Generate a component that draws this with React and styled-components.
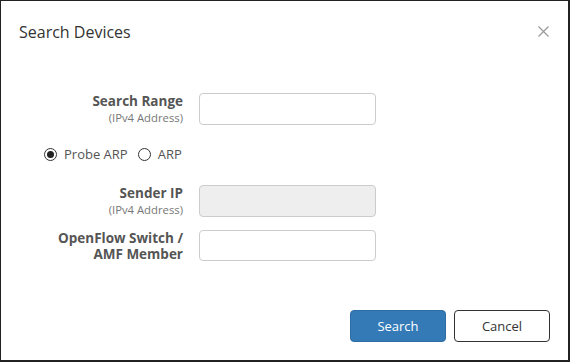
import React, { useState } from "react";
import styled, { createGlobalStyle } from "styled-components";

const GlobalStyle = createGlobalStyle`
  html, body {
    margin: 0;
    padding: 0;
    background: #fff;
  }
  body {
    font-family: "Open Sans", "Noto Sans", "Liberation Sans", sans-serif;
    color: #333;
  }
  * {
    box-sizing: border-box;
  }
`;

const Styled = {
  Modal: styled.div`
    width: 570px;
    height: 362px;
    display: flex;
    flex-direction: column;
    border-style: solid;
    border-color: #222;
    border-width: 1px 2px 2px 1px;
    background: #fff;
  `,
  Header: styled.div`
    display: flex;
    align-items: flex-start;
    justify-content: space-between;
    padding: 18px 18px 0 18px;
    height: 62px;
  `,
  Title: styled.h4`
    margin: 0;
    font-size: 16px;
    font-weight: 400;
    line-height: 26px;
    color: #333;
  `,
  Close: styled.button`
    border: none;
    background: none;
    padding: 0;
    margin-top: 5px;
    width: 14px;
    height: 14px;
    cursor: pointer;
    display: flex;
    align-items: center;
    justify-content: center;
  `,
  Body: styled.div`
    flex: 1;
    display: flex;
    flex-direction: column;
    padding: 30px 0 0 0;
  `,
  Row: styled.div`
    display: grid;
    grid-template-columns: 182px 177px;
    column-gap: 16px;
    align-items: start;
    margin-bottom: ${(p) => p.$gap || 0}px;
  `,
  Label: styled.label`
    display: flex;
    flex-direction: column;
    align-items: flex-end;
    text-align: right;
    font-size: 13.5px;
    font-weight: 700;
    color: #555;
    line-height: ${(p) => p.$lh || 15}px;
    padding-top: ${(p) => p.$top || 0}px;
  `,
  Hint: styled.span`
    font-size: 11.3px;
    font-weight: 400;
    color: #777;
    line-height: 14px;
    margin-top: 2px;
  `,
  Input: styled.input`
    width: 177px;
    height: ${(p) => p.$h || 32}px;
    border: 1px solid #ccc;
    border-radius: 4px;
    background: ${(p) => (p.disabled ? "#eee" : "#fff")};
    font: inherit;
    font-size: 13px;
    padding: 4px 10px;
    outline: none;
  `,
  RadioRow: styled.div`
    display: flex;
    align-items: center;
    gap: 10px;
    padding-left: 43px;
    height: 20px;
    margin: 19px 0 21px;
  `,
  RadioLabel: styled.label`
    display: flex;
    align-items: center;
    gap: 7px;
    font-size: 13px;
    color: #555;
    cursor: pointer;
  `,
  Radio: styled.input`
    appearance: none;
    margin: 0;
    width: 13px;
    height: 13px;
    border: 1px solid #333;
    border-radius: 50%;
    display: grid;
    place-content: center;
    &::before {
      content: "";
      width: 7px;
      height: 7px;
      border-radius: 50%;
      background: #222;
      transform: scale(0);
    }
    &:checked::before {
      transform: scale(1);
    }
  `,
  Footer: styled.div`
    display: flex;
    justify-content: flex-end;
    gap: 8px;
    padding: 0 18px 18px 0;
  `,
  Button: styled.button`
    width: 96px;
    height: 32px;
    border-radius: 4px;
    font-family: inherit;
    font-size: 13px;
    cursor: pointer;
    border: 1px solid ${(p) => (p.$primary ? "#2e6da4" : "#333")};
    background: ${(p) => (p.$primary ? "#337ab7" : "#fff")};
    color: ${(p) => (p.$primary ? "#fff" : "#333")};
  `,
};

const CloseIcon = () => (
  <svg width="11" height="11" viewBox="0 0 11 11">
    <path d="M0.5 0.5 L10.5 10.5 M10.5 0.5 L0.5 10.5" stroke="#999" strokeWidth="1.2" fill="none" />
  </svg>
);

const App = () => {
  const [mode, setMode] = useState("probe");

  return (
    <>
      <GlobalStyle />
      <Styled.Modal>
        <Styled.Header>
          <Styled.Title>Search Devices</Styled.Title>
          <Styled.Close aria-label="Close">
            <CloseIcon />
          </Styled.Close>
        </Styled.Header>
        <Styled.Body>
          <Styled.Row>
            <Styled.Label $top={1}>
              Search Range
              <Styled.Hint>(IPv4 Address)</Styled.Hint>
            </Styled.Label>
            <Styled.Input type="text" />
          </Styled.Row>
          <Styled.RadioRow>
            <Styled.RadioLabel>
              <Styled.Radio
                type="radio"
                name="mode"
                checked={mode === "probe"}
                onChange={() => setMode("probe")}
              />
              Probe ARP
            </Styled.RadioLabel>
            <Styled.RadioLabel>
              <Styled.Radio
                type="radio"
                name="mode"
                checked={mode === "arp"}
                onChange={() => setMode("arp")}
              />
              ARP
            </Styled.RadioLabel>
          </Styled.RadioRow>
          <Styled.Row $gap={13}>
            <Styled.Label $top={1}>
              Sender IP
              <Styled.Hint>(IPv4 Address)</Styled.Hint>
            </Styled.Label>
            <Styled.Input type="text" disabled />
          </Styled.Row>
          <Styled.Row>
            <Styled.Label $lh={16}>
              <span>OpenFlow Switch /</span>
              <span>AMF Member</span>
            </Styled.Label>
            <Styled.Input type="text" $h={31} />
          </Styled.Row>
        </Styled.Body>
        <Styled.Footer>
          <Styled.Button $primary>Search</Styled.Button>
          <Styled.Button>Cancel</Styled.Button>
        </Styled.Footer>
      </Styled.Modal>
    </>
  );
};

export default App;
